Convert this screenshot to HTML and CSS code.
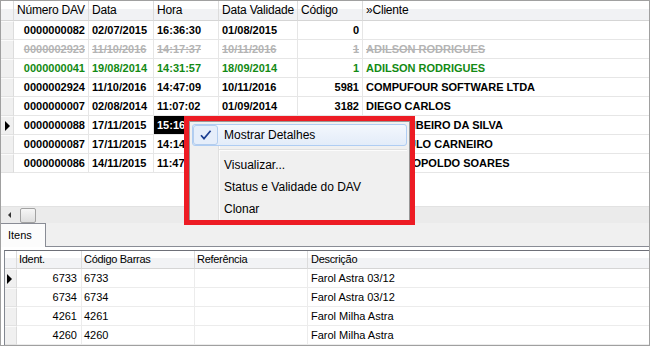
FILE: index.html
```html
<!DOCTYPE html>
<html lang="pt">
<head>
<meta charset="utf-8">
<title>DAV</title>
<link rel="stylesheet" href="styles.css">
</head>
<body>
<div class="frame">
  <div class="grid-top">
    <div class="trow thead">
      <div class="rh"></div>
      <div class="c">Número DAV</div>
      <div class="c">Data</div>
      <div class="c">Hora</div>
      <div class="c">Data Validade</div>
      <div class="c">Código</div>
      <div class="c">»Cliente</div>
    </div>
    <div class="trow">
      <div class="rh"></div>
      <div class="c r">0000000082</div><div class="c">02/07/2015</div><div class="c">16:36:30</div><div class="c">01/08/2015</div><div class="c r">0</div><div class="c"></div>
    </div>
    <div class="trow gone">
      <div class="rh"></div>
      <div class="c r"><s>0000002923</s></div><div class="c"><s>11/10/2016</s></div><div class="c"><s>14:17:37</s></div><div class="c"><s>10/11/2016</s></div><div class="c r"><s>1</s></div><div class="c"><s>ADILSON RODRIGUES</s></div>
    </div>
    <div class="trow ok">
      <div class="rh"></div>
      <div class="c r">0000000041</div><div class="c">19/08/2014</div><div class="c">14:31:57</div><div class="c">18/09/2014</div><div class="c r">1</div><div class="c">ADILSON RODRIGUES</div>
    </div>
    <div class="trow">
      <div class="rh"></div>
      <div class="c r">0000002924</div><div class="c">11/10/2016</div><div class="c">14:47:09</div><div class="c">10/11/2016</div><div class="c r">5981</div><div class="c">COMPUFOUR SOFTWARE LTDA</div>
    </div>
    <div class="trow">
      <div class="rh"></div>
      <div class="c r">0000000007</div><div class="c">02/08/2014</div><div class="c">11:07:02</div><div class="c">01/09/2014</div><div class="c r">3182</div><div class="c">DIEGO CARLOS</div>
    </div>
    <div class="trow">
      <div class="rh"><span class="tri"></span></div>
      <div class="c r">0000000088</div><div class="c">17/11/2015</div><div class="c sel">15:16</div><div class="c"></div><div class="c r"></div><div class="c">MARIA RIBEIRO DA SILVA</div>
    </div>
    <div class="trow">
      <div class="rh"></div>
      <div class="c r">0000000087</div><div class="c">17/11/2015</div><div class="c">14:14</div><div class="c"></div><div class="c r"></div><div class="c">LUIZ PAULO CARNEIRO</div>
    </div>
    <div class="trow">
      <div class="rh"></div>
      <div class="c r">0000000086</div><div class="c">14/11/2015</div><div class="c">11:47</div><div class="c"></div><div class="c r"></div><div class="c">JOSÉ LEOPOLDO SOARES</div>
    </div>
  </div>

  <div class="hscroll">
    <span class="larrow"></span>
    <span class="thumb"></span>
  </div>

  <div class="tabs">
    <div class="tab">Itens</div>
  </div>

  <div class="panel">
    <div class="grid-bot">
      <div class="brow bhead">
        <div class="rh"></div>
        <div class="c">Ident.</div>
        <div class="c">Código Barras</div>
        <div class="c">Referência</div>
        <div class="c">Descrição</div>
      </div>
      <div class="brow">
        <div class="rh"><span class="tri"></span></div>
        <div class="c r">6733</div><div class="c">6733</div><div class="c"></div><div class="c">Farol Astra 03/12</div>
      </div>
      <div class="brow">
        <div class="rh"></div>
        <div class="c r">6734</div><div class="c">6734</div><div class="c"></div><div class="c">Farol Astra 03/12</div>
      </div>
      <div class="brow">
        <div class="rh"></div>
        <div class="c r">4261</div><div class="c">4261</div><div class="c"></div><div class="c">Farol Milha Astra</div>
      </div>
      <div class="brow">
        <div class="rh"></div>
        <div class="c r">4260</div><div class="c">4260</div><div class="c"></div><div class="c">Farol Milha Astra</div>
      </div>
    </div>
  </div>

  <div class="menu">
    <div class="gutter"></div>
    <div class="item hot">
      <span class="checkbox">
        <svg width="12" height="10" viewBox="0 0 12 10"><path d="M1 5.2 L4 8.6 L10.6 0.8" fill="none" stroke="#1d3f91" stroke-width="1.7"/></svg>
      </span>
      Mostrar Detalhes
    </div>
    <div class="sep"></div>
    <div class="item">Visualizar...</div>
    <div class="item">Status e Validade do DAV</div>
    <div class="item">Clonar</div>
  </div>
  <div class="annot"></div>
</div>
</body>
</html>
```

FILE: styles.css
```css
html, body {
  margin: 0;
  padding: 0;
  background: #ffffff;
}

.frame {
  position: relative;
  width: 650px;
  height: 346px;
  box-sizing: border-box;
  border: 1px solid #a0a0a0;
  display: flex;
  flex-direction: column;
  overflow: hidden;
  font-family: "Liberation Sans", Arial, sans-serif;
  color: #000;
}

/* ---------- top grid ---------- */
.grid-top {
  height: 205px;
  flex: none;
  background: #fff;
  overflow: hidden;
}

.trow {
  display: grid;
  grid-template-columns: 13px 75px 65px 65px 79px 65px 1fr;
  height: 19px;
  font-size: 11px;
  font-weight: bold;
  line-height: 18px;
}

.trow .c {
  box-sizing: border-box;
  border-right: 1px solid #e6e6e6;
  border-bottom: 1px solid #e6e6e6;
  padding: 0 3px;
  white-space: nowrap;
  overflow: hidden;
}

.trow .c:last-child {
  border-right: none;
}

.trow .r {
  text-align: right;
}

.trow .rh {
  box-sizing: border-box;
  background: #f0f0f0;
  border-top: 1px solid #fbfbfb;
  border-right: 1px solid #dcdcdc;
  border-bottom: 1px solid #e2e2e2;
  display: flex;
  align-items: center;
  padding-left: 4px;
}

.thead {
  height: 20px;
  font-weight: normal;
  font-size: 12px;
  line-height: 19px;
  background: linear-gradient(#ffffff 0, #ffffff 8px, #f1f2f4 8px, #f1f2f4 100%);
}

.thead .c,
.thead .rh {
  background: transparent;
  border-top: none;
  border-right: 1px solid #dcdcdc;
  border-bottom: 1px solid #d5d5d5;
  letter-spacing: -0.2px;
}

.gone {
  color: #b4b4b4;
}

.gone s {
  text-decoration: line-through;
}

.ok {
  color: #138a13;
}

.trow .sel {
  background: #000;
  color: #fff;
}

.tri {
  display: block;
  width: 0;
  height: 0;
  border-top: 5px solid transparent;
  border-bottom: 5px solid transparent;
  border-left: 5px solid #000;
}

/* ---------- scrollbar ---------- */
.hscroll {
  height: 17px;
  flex: none;
  box-sizing: border-box;
  background: #ebebeb;
  border-top: 1px solid #e2e2e2;
  display: flex;
  align-items: center;
  padding-left: 7px;
  gap: 9px;
}

.larrow {
  width: 0;
  height: 0;
  border-top: 3px solid transparent;
  border-bottom: 3px solid transparent;
  border-right: 3px solid #333;
}

.thumb {
  width: 16px;
  height: 15px;
  box-sizing: border-box;
  border: 1px solid #a2a2a2;
  border-radius: 2px;
  background: linear-gradient(#f6f6f6, #dedede);
}

/* ---------- tabs ---------- */
.tabs {
  height: 24px;
  flex: none;
  box-sizing: border-box;
  background: #f0f0f0;
  border-bottom: 1px solid #898c95;
  display: flex;
  align-items: flex-end;
}

.tab {
  height: 24px;
  width: 45px;
  margin-bottom: -1px;
  box-sizing: border-box;
  background: #fcfcfc;
  border-top: 1px solid #898c95;
  border-right: 1px solid #898c95;
  padding-left: 7px;
  font-size: 11px;
  line-height: 22px;
}

/* ---------- bottom grid ---------- */
.panel {
  flex: 1;
  background: #fff;
  padding: 3px 0 0 3px;
  display: flex;
}

.grid-bot {
  flex: 1;
  box-sizing: border-box;
  border-top: 1px solid #6e7078;
  border-left: 1px solid #828790;
  overflow: hidden;
}

.brow {
  display: grid;
  grid-template-columns: 12px 65px 113px 113px 1fr;
  height: 19px;
  font-size: 11px;
  line-height: 18px;
}

.brow .c {
  box-sizing: border-box;
  border-right: 1px solid #ececec;
  border-bottom: 1px solid #ececec;
  padding: 0 2px 0 2px;
  white-space: nowrap;
  overflow: hidden;
}

.brow .c:last-child {
  border-right: none;
  padding-left: 3px;
}

.brow .r {
  text-align: right;
  padding-right: 4px;
}

.brow .rh {
  box-sizing: border-box;
  background: #f0f0f0;
  border-top: 1px solid #fbfbfb;
  border-right: 1px solid #dcdcdc;
  border-bottom: 1px solid #e2e2e2;
  display: flex;
  align-items: center;
  padding-left: 2px;
}

.bhead {
  height: 18px;
  line-height: 17px;
  letter-spacing: -0.3px;
  background: linear-gradient(#ffffff 0, #ffffff 7px, #f2f3f5 7px, #f2f3f5 100%);
}

.bhead .c,
.bhead .rh {
  background: transparent;
  border-top: none;
  border-right: 1px solid #dcdcdc;
  border-bottom: 1px solid #d5d5d5;
}

/* ---------- context menu ---------- */
.menu {
  position: absolute;
  left: 188px;
  top: 120px;
  width: 221px;
  height: 102px;
  box-sizing: border-box;
  background: #f0f0f0;
  border: 1px solid #979797;
  padding: 2px;
  font-size: 12px;
  z-index: 5;
}

.gutter {
  position: absolute;
  left: 28px;
  top: 2px;
  bottom: 0;
  width: 1px;
  background: #e0e0e0;
  border-right: 1px solid #fcfcfc;
}

.item {
  position: relative;
  height: 22px;
  box-sizing: border-box;
  padding-left: 32px;
  display: flex;
  align-items: center;
  white-space: nowrap;
}

.item.hot {
  border: 1px solid #afcdf3;
  border-radius: 3px;
  padding-left: 31px;
  background: linear-gradient(#f3f7fd, #e3ecf9);
}

.checkbox {
  position: absolute;
  left: 0;
  top: 0;
  width: 25px;
  height: 20px;
  box-sizing: border-box;
  border: 1px solid #b3cdee;
  border-radius: 3px;
  background: #e6eefa;
  display: flex;
  align-items: center;
  justify-content: center;
}

.sep {
  position: relative;
  height: 8px;
}

.sep::after {
  content: "";
  position: absolute;
  left: 27px;
  right: 0;
  top: 3px;
  height: 1px;
  background: #e0e0e0;
  border-bottom: 1px solid #fcfcfc;
}

/* ---------- annotation ---------- */
.annot {
  position: absolute;
  left: 183px;
  top: 115px;
  width: 231px;
  height: 109px;
  box-sizing: border-box;
  border: 5px solid #ed1c24;
  z-index: 6;
}
```
